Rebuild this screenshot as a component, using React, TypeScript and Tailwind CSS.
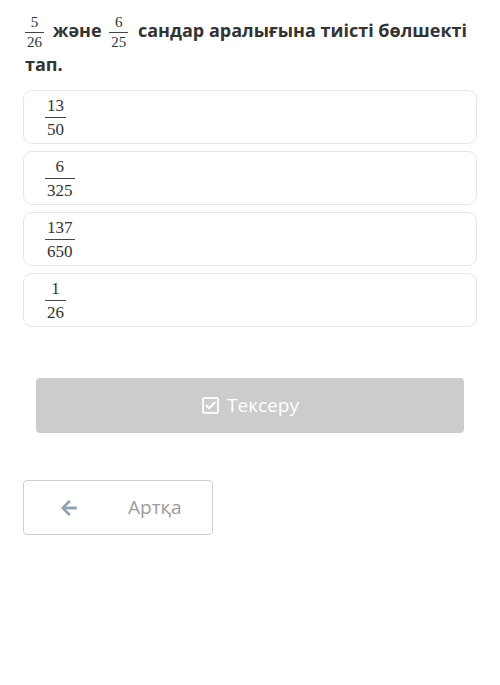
import { FaRegCheckSquare, FaArrowLeft } from "react-icons/fa";

function Frac({
  n,
  d,
  size = "text-[17px]",
  gap = "3px",
}: {
  n: string;
  d: string;
  size?: string;
  gap?: "3px" | "2px";
}) {
  const top = gap === "3px" ? "pb-[3px]" : "pb-[2px]";
  const bot = gap === "3px" ? "pt-[3px]" : "pt-[2px]";
  return (
    <span
      className={`inline-flex flex-col items-center align-middle leading-none font-normal text-[#333] ${size}`}
      style={{ fontFamily: '"Liberation Serif", serif' }}
    >
      <span className={`px-[2px] ${top}`}>{n}</span>
      <span className="w-full border-t border-[#444]" />
      <span className={`px-[2px] ${bot}`}>{d}</span>
    </span>
  );
}

const options = [
  { n: "13", d: "50" },
  { n: "6", d: "325" },
  { n: "137", d: "650" },
  { n: "1", d: "26" },
];

export default function App() {
  return (
    <div
      className="w-[500px] h-[685px] bg-white px-[23px] pt-[15px]"
      style={{ fontFamily: '"Open Sans", "Noto Sans", sans-serif' }}
    >
      <h2 className="text-[18px] font-bold leading-[28px] text-[#333] pl-[2px]">
        <Frac n="5" d="26" size="text-[15px]" gap="2px" />{" "}
        <span className="ml-[4px]">жəне</span>{" "}
        <span className="ml-[3px]">
          <Frac n="6" d="25" size="text-[15px]" gap="2px" />
        </span>{" "}
        <span className="ml-[5px]">сандар аралығына тиісті бөлшекті тап.</span>
      </h2>

      <div className="mt-[12px] flex flex-col gap-[7px]">
        {options.map((o) => (
          <div
            key={o.n + o.d}
            className="h-[54px] rounded-[9px] border border-[#e6e6e6] flex items-center pl-[21px]"
          >
            <Frac n={o.n} d={o.d} />
          </div>
        ))}
      </div>

      <div className="mt-[51px] px-[13px]">
        <button className="w-full h-[55px] rounded-[4px] bg-[#cccccc] text-white text-[19px] flex items-center justify-center gap-[7px]">
          <FaRegCheckSquare className="text-[19px]" />
          <span>Тексеру</span>
        </button>
      </div>

      <div className="mt-[47px]">
        <button className="w-[190px] h-[55px] rounded-[4px] border border-[#cfcfcf] bg-white flex items-center text-[#9a9a9a] text-[19px]">
          <FaArrowLeft className="ml-[36px] text-[18px] text-[#8fa3b5]" />
          <span className="ml-[50px]">Артқа</span>
        </button>
      </div>
    </div>
  );
}
